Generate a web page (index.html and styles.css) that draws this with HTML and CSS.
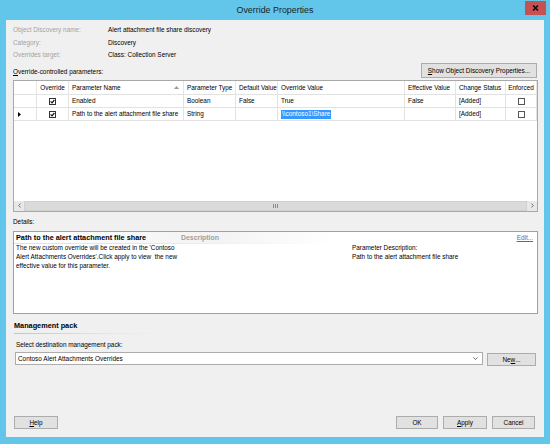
FILE: index.html
```html
<!DOCTYPE html>
<html>
<head>
<meta charset="utf-8">
<link rel="stylesheet" href="styles.css">
</head>
<body>
<div class="window">
  <div class="titlebar">
    <div class="title">Override Properties</div>
    <div class="close"><svg width="7" height="6" viewBox="0 0 7 6"><path d="M1 0.5 L6 5.5 M6 0.5 L1 5.5" stroke="#111" stroke-width="1.6"/></svg></div>
  </div>
  <div class="client">
    <div class="info">
      <div class="lbl">Object Discovery name:</div><div>Alert attachment file share discovery</div>
      <div class="lbl">Category:</div><div>Discovery</div>
      <div class="lbl">Overrides target:</div><div>Class: Collection Server</div>
    </div>
    <div class="param-row">
      <div class="param-label"><u>O</u>verride-controlled parameters:</div>
      <div class="btn btn-show"><u>S</u>how Object Discovery Properties...</div>
    </div>
    <div class="table">
      <div class="grid">
        <div class="c h"></div>
        <div class="c h center">Override</div>
        <div class="c h sort">Parameter Name<svg class="sortico" width="5" height="3" viewBox="0 0 5 3"><path d="M0 3 L2.5 0 L5 3 Z" fill="#9a9a9a"/></svg></div>
        <div class="c h">Parameter Type</div>
        <div class="c h">Default Value</div>
        <div class="c h">Override Value</div>
        <div class="c h">Effective Value</div>
        <div class="c h">Change Status</div>
        <div class="c h center">Enforced</div>

        <div class="c rh"></div>
        <div class="c center"><svg class="cb" width="7" height="7" viewBox="0 0 7 7"><rect x="0.5" y="0.5" width="6" height="6" fill="#fff" stroke="#333"/><path d="M1.6 3.4 L3 4.8 L5.4 2" fill="none" stroke="#111" stroke-width="1.2"/></svg></div>
        <div class="c">Enabled</div>
        <div class="c">Boolean</div>
        <div class="c">False</div>
        <div class="c">True</div>
        <div class="c">False</div>
        <div class="c">[Added]</div>
        <div class="c center"><svg class="cb" width="7" height="7" viewBox="0 0 7 7"><rect x="0.5" y="0.5" width="6" height="6" fill="#fff" stroke="#555"/></svg></div>

        <div class="c rh"><svg width="3" height="5" viewBox="0 0 3 5"><path d="M0 0 L3 2.5 L0 5 Z" fill="#000"/></svg></div>
        <div class="c center"><svg class="cb" width="7" height="7" viewBox="0 0 7 7"><rect x="0.5" y="0.5" width="6" height="6" fill="#fff" stroke="#333"/><path d="M1.6 3.4 L3 4.8 L5.4 2" fill="none" stroke="#111" stroke-width="1.2"/></svg></div>
        <div class="c">Path to the alert attachment file share</div>
        <div class="c">String</div>
        <div class="c"></div>
        <div class="c"><span class="sel">\\contoso1\Share</span></div>
        <div class="c"></div>
        <div class="c">[Added]</div>
        <div class="c center"><svg class="cb" width="7" height="7" viewBox="0 0 7 7"><rect x="0.5" y="0.5" width="6" height="6" fill="#fff" stroke="#555"/></svg></div>
      </div>
      <div class="hscroll">
        <div class="arrow"><svg width="3" height="5" viewBox="0 0 3 5"><path d="M2.5 0.5 L0.7 2.5 L2.5 4.5" fill="none" stroke="#555" stroke-width="0.8"/></svg></div>
        <div class="thumb"><svg width="5" height="4" viewBox="0 0 5 4"><path d="M0.5 0 V4 M2.5 0 V4 M4.5 0 V4" stroke="#777" stroke-width="0.8"/></svg></div>
        <div class="arrow"><svg width="3" height="5" viewBox="0 0 3 5"><path d="M0.5 0.5 L2.3 2.5 L0.5 4.5" fill="none" stroke="#555" stroke-width="0.8"/></svg></div>
      </div>
    </div>
    <div class="details-label">Details:</div>
    <div class="details">
      <div class="dhead">
        <div class="dtitle">Path to the alert attachment file share</div>
        <div class="ddesc">Description</div>
        <a class="edit">Edit...</a>
      </div>
      <div class="dbody">
        <div class="dtext">The new custom override will be created in the 'Contoso<br>Alert Attachments Overrides'.Click apply to view&nbsp; the new<br>effective value for this parameter.</div>
        <div class="dparam">Parameter Description:<br>Path to the alert attachment file share</div>
      </div>
    </div>
    <div class="mp">
      <div class="mp-title">Management pack</div>
      <div class="mp-line"></div>
      <div class="mp-label">Select destination management pack:</div>
      <div class="mp-row">
        <div class="combo"><span>Contoso Alert Attachments Overrides</span><svg width="5" height="3" viewBox="0 0 5 3"><path d="M0.4 0.4 L2.5 2.5 L4.6 0.4" fill="none" stroke="#444" stroke-width="0.8"/></svg></div>
        <div class="btn btn-new">Ne<u>w</u>...</div>
      </div>
    </div>
    <div class="footer">
      <div class="btn btn-help"><u>H</u>elp</div>
      <div class="right">
        <div class="btn btn-ok">OK</div>
        <div class="btn btn-apply"><u>A</u>pply</div>
        <div class="btn btn-cancel">Cancel</div>
      </div>
    </div>
    <div class="grip"></div>
  </div>
</div>
</body>
</html>
```

FILE: styles.css
```css
* { box-sizing: border-box; }
body {
  margin: 0;
  font-family: "Liberation Sans", Arial, sans-serif;
  font-size: 6.4px;
  color: #000;
}
.window {
  width: 550px;
  height: 444px;
  background: #62c6ea;
  display: flex;
  flex-direction: column;
}
.titlebar {
  height: 20px;
  display: grid;
  grid-template-columns: 1fr auto 1fr;
  align-items: start;
}
.title {
  grid-column: 2;
  font-size: 8.9px;
  line-height: 21px;
  color: #1e1e1e;
}
.close {
  grid-column: 3;
  justify-self: end;
  margin: 1px 4px 0 0;
  width: 21px;
  height: 14px;
  background: #c75050;
  display: flex;
  align-items: center;
  justify-content: center;
}
.client {
  position: relative;
  flex: 1;
  margin: 0 6px 7px 6px;
  background: #f0f0f0;
  padding: 4px 6px 8px 7px;
  display: flex;
  flex-direction: column;
}
.info {
  display: grid;
  grid-template-columns: 95px auto;
  grid-auto-rows: 12.5px;
  align-items: center;
  line-height: 8px;
}
.lbl { color: #a3a3a3; }
.param-row {
  height: 18px;
  display: flex;
  justify-content: space-between;
  align-items: center;
}
.param-label {
  align-self: flex-end;
  line-height: 8px;
  margin-bottom: 3.5px;
}
.btn {
  background: #e1e1e1;
  border: 1px solid #acacac;
  display: flex;
  align-items: center;
  justify-content: center;
  line-height: 8px;
}
.btn-show { width: 116px; height: 15px; margin-right: 1px; }
.table {
  margin-top: 0.5px;
  height: 132px;
  border: 1px solid #a9a9a9;
  background: #fff;
  display: flex;
  flex-direction: column;
  justify-content: space-between;
}
.grid {
  display: grid;
  grid-template-columns: 23px 32px 115px 52px 42px 127px 51px 50px 31px;
  grid-template-rows: 14px 13px 13px;
}
.c {
  border-right: 1px solid #e2e2e2;
  border-bottom: 1px solid #e2e2e2;
  display: flex;
  align-items: center;
  padding-left: 3px;
  line-height: 8px;
  white-space: nowrap;
  overflow: hidden;
}
.c.h { border-right-color: #e5e5e5; }
.c.center { justify-content: center; padding-left: 0; }
.c.sort { justify-content: space-between; padding-right: 4px; }
.sortico { margin-bottom: 1px; }
.c.rh { padding-left: 4px; }
.sel {
  background: #3399ff;
  color: #fff;
  padding: 0.5px 1px;
}
.hscroll {
  height: 10px;
  margin-bottom: 0.5px;
  display: flex;
  background: #e8e8e8;
}
.arrow {
  width: 10px;
  display: flex;
  align-items: center;
  justify-content: center;
}
.thumb {
  flex: 1;
  background: #dadada;
  border: 1px solid #d0d0d0;
  display: flex;
  align-items: center;
  justify-content: center;
}
.details-label {
  margin-top: 6px;
  line-height: 8px;
}
.details {
  margin-top: 5px;
  height: 83px;
  border: 1px solid #a0a0a0;
  background: #fff;
}
.dhead {
  height: 12px;
  display: flex;
  align-items: center;
  background: linear-gradient(to right, #ffffff 0, #f3f3f3 200px, #ffffff 320px);
  border-bottom: 1px solid transparent;
  border-image: linear-gradient(to right, #e0e0e0 0, #e8e8e8 150px, #ffffff 320px) 1;
  line-height: 9px;
}
.dtitle {
  font-weight: bold;
  font-size: 7.3px;
  width: 167px;
  padding-left: 2px;
}
.ddesc {
  font-weight: bold;
  font-size: 6.9px;
  color: #a0a0a0;
  flex: 1;
}
.edit {
  color: #3d6dcc;
  text-decoration: underline;
  margin-right: 4px;
}
.dbody {
  display: grid;
  grid-template-columns: 338px 1fr;
  line-height: 8.8px;
}
.dtext { padding-left: 2px; }
.mp {
  padding-left: 1px;
}
.mp-title {
  margin-top: 8px;
  font-weight: bold;
  font-size: 7.3px;
  line-height: 8px;
}
.mp-line {
  margin-top: 3px;
  width: 145px;
  height: 1px;
  background: linear-gradient(to right, #c4c4c4, #e8e8e8 70%, rgba(240,240,240,0));
}
.mp-label {
  margin-top: 7px;
  line-height: 8px;
  padding-left: 2px;
}
.mp-row {
  margin-top: 3px;
  display: flex;
  align-items: flex-start;
  gap: 4px;
  padding-left: 1px;
}
.combo {
  width: 468px;
  height: 13px;
  background: #fff;
  border: 1px solid #acacac;
  display: flex;
  align-items: center;
  justify-content: space-between;
  padding: 0 4px 0 2px;
  line-height: 8px;
}
.btn-new { width: 49px; height: 13px; margin-top: 1px; }
.footer {
  margin-top: auto;
  display: flex;
  justify-content: space-between;
  padding-left: 1px;
  padding-right: 3px;
}
.right { display: flex; gap: 5px; }
.btn-help { width: 44px; height: 13px; }
.btn-ok { width: 42px; height: 13px; }
.btn-apply { width: 44px; height: 13px; }
.btn-cancel { width: 43px; height: 13px; }
.grip {
  position: absolute;
  right: 1px;
  bottom: 1px;
  width: 4px;
  height: 4px;
  background: radial-gradient(circle, #b0b0b0 0.5px, transparent 0.6px) 0 0 / 2px 2px;
}
```
